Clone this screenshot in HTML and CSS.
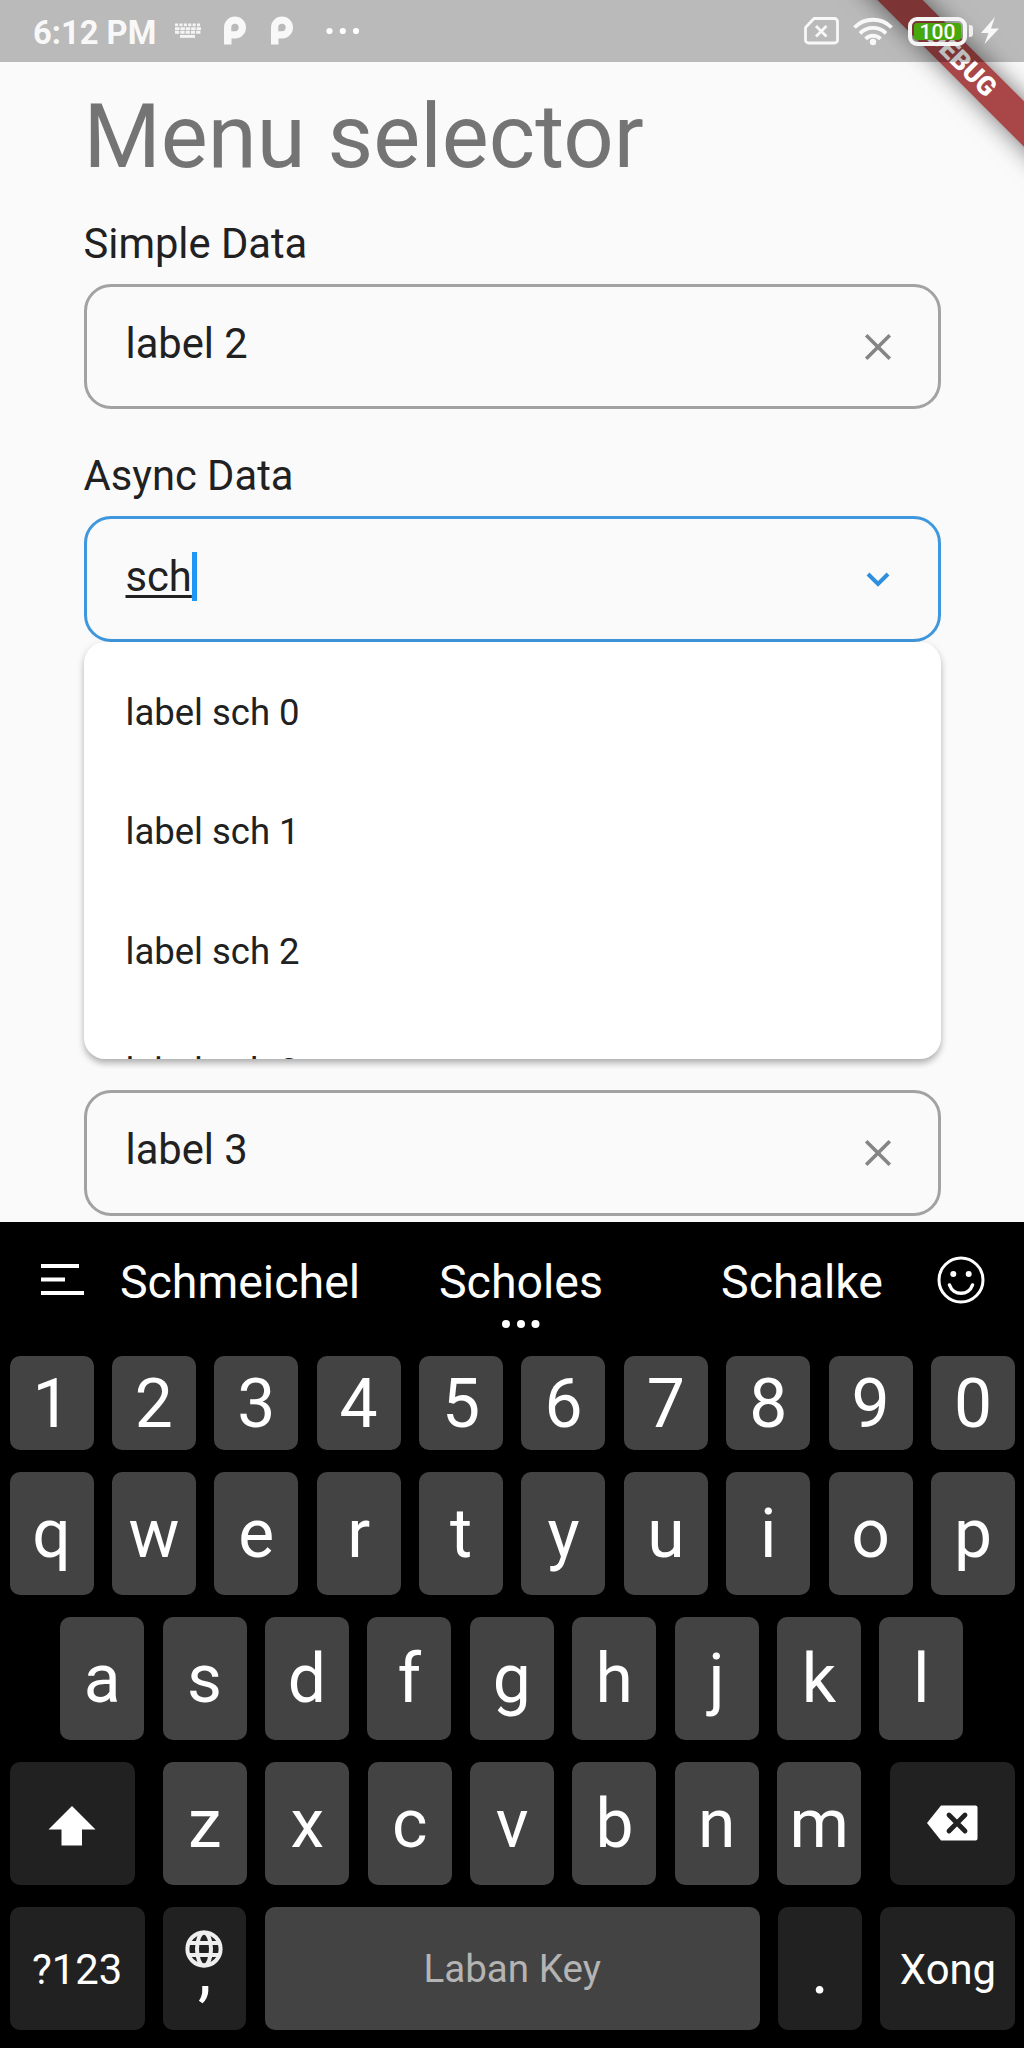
FILE: index.html
```html
<!DOCTYPE html>
<html lang="en">
<head>
<meta charset="utf-8">
<title>Menu selector</title>
<link rel="stylesheet" href="styles.css">
</head>
<body>
<div class="screen">
  <div class="banner">DEBUG</div>
  <header class="status">
    <span class="clock">6:12 PM</span>
    <svg class="s-kbd" width="28" height="16" viewBox="0 0 28 16"><g fill="none" stroke="#f4f4f4" stroke-width="2.9"><path d="M1 1.9H27" stroke-dasharray="3.100 1.300"/><path d="M1 5.600H27" stroke-dasharray="4.500 .9"/><path d="M1 9.300H27" stroke-dasharray="4.200 1.100"/><path d="M6 13.400H21"/></g></svg>
    <svg class="s-p" width="24" height="30" viewBox="0 0 24 30"><path fill="#f8f8f8" fill-rule="evenodd" d="M1 28.500V11.500A11 11 0 1 1 12 22.500H8.500V28.500ZM12 7.800a3.700 3.700 0 0 0-3.700 3.700V15.200H12a3.700 3.700 0 0 0 0-7.400Z"/></svg>
    <svg class="s-p2" width="24" height="30" viewBox="0 0 24 30"><path fill="#f8f8f8" fill-rule="evenodd" d="M1 28.500V11.500A11 11 0 1 1 12 22.500H8.500V28.500ZM12 7.800a3.700 3.700 0 0 0-3.700 3.700V15.200H12a3.700 3.700 0 0 0 0-7.400Z"/></svg>
    <svg class="s-dots" width="34" height="8" viewBox="0 0 34 8"><g fill="#fff"><circle cx="3.500" cy="4" r="3.100"/><circle cx="16.800" cy="4" r="3.100"/><circle cx="30" cy="4" r="3.100"/></g></svg>
    <span class="grow"></span>
    <svg class="s-sim" width="35" height="28" viewBox="0 0 35 28"><path d="M10 1.500H30.500a3 3 0 0 1 3 3V23a3 3 0 0 1-3 3H4.500a3 3 0 0 1-3-3V10.500ZM12 9l10.500 10.500M22.500 9l-10.500 10.500" fill="none" stroke="#f8f8f8" stroke-width="2.800" stroke-linejoin="round"/></svg>
    <svg class="s-wifi" width="40" height="30" viewBox="0 0 40 30"><g fill="none" stroke="#f8f8f8" stroke-width="3.800"><path d="M1.500 11.500a26 26 0 0 1 37 0"/><path d="M7 17.300a18.300 18.300 0 0 1 26 0"/><path d="M12.600 22.800a10.500 10.500 0 0 1 14.800 0"/></g><circle cx="20" cy="26" r="3.200" fill="#f8f8f8"/></svg>
    <div class="battery"><span class="charge">100</span></div>
    <span class="nub"></span>
    <svg class="s-bolt" width="18" height="28" viewBox="0 0 18 28"><path fill="#f8f8f8" d="M14 0 0 16H7.500L3.500 27 18 11.500H10Z"/></svg>
  </header>

  <main class="page">
    <h1 class="title">Menu selector</h1>
    <label class="label">Simple Data</label>
    <div class="field">
      <span class="value">label 2</span>
      <svg class="icon" width="28" height="28" viewBox="0 0 28 28"><path d="M2.200 2.200 25.800 25.800M25.800 2.200 2.200 25.800" fill="none" stroke="#858585" stroke-width="3.600"/></svg>
    </div>
    <label class="label">Async Data</label>
    <div class="field focused">
      <span class="value typing">sch</span><span class="caret"></span>
      <svg class="icon" width="28" height="28" viewBox="0 0 28 28"><path d="M4 9 14 19 24 9" fill="none" stroke="#2f8ede" stroke-width="4"/></svg>
      <ul class="menu">
        <li class="item">label sch 0</li>
        <li class="item">label sch 1</li>
        <li class="item">label sch 2</li>
        <li class="item">label sch 3</li>
      </ul>
    </div>
    <div class="field last">
      <span class="value">label 3</span>
      <svg class="icon" width="28" height="28" viewBox="0 0 28 28"><path d="M2.200 2.200 25.800 25.800M25.800 2.200 2.200 25.800" fill="none" stroke="#858585" stroke-width="3.600"/></svg>
    </div>
  </main>

  <section class="keyboard">
    <div class="suggest">
      <svg class="lines" width="44" height="32" viewBox="0 0 44 32"><path d="M0 2H38M0 15.500H24M0 29H43" fill="none" stroke="#fff" stroke-width="4"/></svg>
      <span class="word">Schmeichel</span>
      <span class="word">Scholes<svg class="more" width="38" height="8" viewBox="0 0 38 8"><g fill="#fff"><circle cx="4" cy="4" r="4"/><circle cx="19" cy="4" r="4"/><circle cx="33.500" cy="4" r="4"/></g></svg></span>
      <span class="word">Schalke</span>
      <svg class="smile" width="48" height="48" viewBox="0 0 48 48"><g fill="none" stroke="#fff" stroke-width="3"><circle cx="24" cy="24" r="22"/><path d="M12.500 29c3.800 11 19.200 11 23 0" stroke-width="3.500" stroke-linecap="round"/></g><g fill="#fff"><circle cx="16.300" cy="18" r="3"/><circle cx="31.700" cy="18" r="3"/></g></svg>
    </div>
    <div class="row digits"><b>1</b><b>2</b><b>3</b><b>4</b><b>5</b><b>6</b><b>7</b><b>8</b><b>9</b><b>0</b></div>
    <div class="row"><b>q</b><b>w</b><b>e</b><b>r</b><b>t</b><b>y</b><b>u</b><b>i</b><b>o</b><b>p</b></div>
    <div class="row home"><b>a</b><b>s</b><b>d</b><b>f</b><b>g</b><b>h</b><b>j</b><b>k</b><b>l</b></div>
    <div class="row lower">
      <b class="dark"><svg width="48" height="40" viewBox="0 0 48 40"><path d="M24 0 47.500 23.500H34V39.500H13.500V23.500H.5Z" fill="#fff"/></svg></b>
      <b>z</b><b>x</b><b>c</b><b>v</b><b>b</b><b>n</b><b>m</b>
      <b class="dark erase"><svg width="51" height="36" viewBox="0 0 51 36"><path d="M14 .5H48.500a2 2 0 0 1 2 2V33.500a2 2 0 0 1-2 2H14L0 18Z" fill="#fff"/><path d="m22 10 16 16M38 10 22 26" stroke="#212121" stroke-width="4.800" stroke-linecap="round"/></svg></b>
    </div>
    <div class="row bottom">
      <b class="dark small">?123</b>
      <b class="dark punct"><svg class="globe" width="38" height="38" viewBox="0 0 38 38"><g fill="none" stroke="#eee" stroke-width="4"><circle cx="19" cy="19" r="16.600"/><ellipse cx="19" cy="19" rx="7" ry="16.600"/><path d="M4 12.900H34M4 25.100H34"/></g></svg>,</b>
      <b class="space">Laban Key</b>
      <b class="dark punct">.</b>
      <b class="dark small">Xong</b>
    </div>
  </section>
</div>
</body>
</html>
```
FILE: styles.css
```css
* { box-sizing: border-box; }
body { margin: 0; background: #fafafa; font-family: Roboto, sans-serif; color: #212121; }
svg { display: block; flex: none; }
.screen { position: relative; width: 1024px; height: 2048px; overflow: hidden; display: flex; flex-direction: column; }

/* corner ribbon, below the status bar scrim */
.banner {
  position: absolute; left: 812px; top: 46px; width: 300px; height: 32px;
  transform: rotate(45deg); background: #a84648; box-shadow: 0 0 24px rgba(0,0,0,.55);
  color: #fff; font-size: 26.6px; font-weight: 900; line-height: 32px; text-align: center;
}

.status {
  position: relative; flex: none; height: 62.3px; padding: 0 25px 0 33px;
  background: rgba(0,0,0,.255); display: flex; align-items: center;
}
.clock { color: #f8f8f8; font-size: 32.7px; font-weight: 700; line-height: 62px; width: 124px; margin-right: 17px; white-space: nowrap; padding-top: 3px; }
.s-kbd { margin-right: 20.5px; }
.s-p { margin-right: 23.3px; }
.s-p2 { margin-right: 32px; }
.grow { flex: 1; }
.s-sim { margin-right: 14px; }
.s-wifi { margin-right: 15px; }
.battery { width: 59px; height: 29px; border: 4px solid #f4f4f4; border-radius: 9px; padding: 2px; }
.charge { display: block; height: 17px; background: #47a80d; border-radius: 3px; color: #fff; font-size: 21px; font-weight: 500; line-height: 18px; text-align: center; }
.nub { width: 4px; height: 12px; margin: 0 8px 0 2px; background: #eee; border-radius: 0 3px 3px 0; }

.page { flex: none; height: 1160px; padding: 22.400px 83.500px 0; display: flex; flex-direction: column; }
.title { margin: 0 0 30px; font-size: 88.600px; font-weight: 400; line-height: 104px; color: #747474; }
.label { font-size: 41.700px; line-height: 49px; margin-bottom: 16.300px; }
.field {
  position: relative; flex: none; height: 125.500px; margin-bottom: 41.500px; padding: 0 46px 0 39px;
  border: 3px solid #a2a2a2; border-radius: 27px; display: flex; align-items: center;
}
.field.focused { border-color: #3f97de; }
.field.last { margin-top: 406.800px; }
.value { font-size: 41.700px; line-height: 49px; margin-top: -6px; }
.typing { text-decoration: underline; text-decoration-thickness: 2.600px; text-underline-offset: 4px; text-decoration-skip-ink: none; }
.caret { width: 5px; height: 49px; background: #2196f3; margin-top: -5px; }
.icon { margin-left: auto; }

.menu {
  position: absolute; left: -3px; right: -3px; top: 122.500px; z-index: 2; height: 417.500px; margin: 0; padding: 11px 0 0;
  list-style: none; overflow: hidden; background: #fff; border-radius: 21px;
  box-shadow: 0 5px 7px -1px rgba(0,0,0,.24), 0 2px 9px rgba(0,0,0,.12);
}
.item { height: 119.700px; padding-left: 42px; font-size: 36.500px; line-height: 120px; }

.keyboard { flex: 1; background: #000; color: #fff; padding: 0 9.500px; }
.suggest { height: 133.700px; display: grid; grid-template-columns: 90px 281px 281px 281px 70px; }
.word { position: relative; font-size: 46.500px; line-height: 54px; text-align: center; padding-top: 33px; }
.more { position: absolute; left: 50%; margin-left: -19px; top: 98px; }
.lines { margin: 42px 0 0 31px; }
.smile { margin: 34px 0 0 -5.500px; }
.row { display: grid; grid-template-columns: repeat(10, 84px); grid-template-rows: 100%; column-gap: 18.400px; height: 123px; margin-bottom: 22.100px; }
.row b { background: #434343; border-radius: 10px; font-size: 67.800px; font-weight: 400; line-height: 125px; text-align: center; }
.row .dark { background: #212121; }
.digits { height: 94.500px; margin-bottom: 21.200px; }
.digits b { line-height: 97px; }
.home { grid-template-columns: repeat(9, 84px); padding-left: 50.700px; }
.row.lower { display: flex; }
.lower b { width: 84px; flex: none; }
.lower .dark { width: 125.300px; margin-right: 9.700px; display: flex; align-items: center; justify-content: center; padding-top: 6px; }
.lower .erase { margin: 0 0 0 10px; padding: 0; }
.bottom { grid-template-columns: 135.400px 83px 495px 84px 135px; }
.row .small { font-size: 41.800px; }
.row .space { font-size: 38.600px; color: #b4b4b4; line-height: 123px; }
.row .punct { position: relative; line-height: 126px; }
.globe { position: absolute; left: 21.500px; top: 23px; }
```
